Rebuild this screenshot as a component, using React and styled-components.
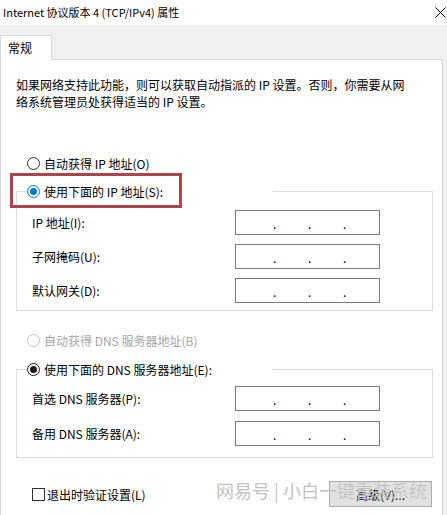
import React from 'react';
import styled, { createGlobalStyle, css } from 'styled-components';

const Global = createGlobalStyle`
  html, body { margin: 0; padding: 0; background: #f0f0f0; }
  body {
    font-family: "Noto Sans CJK SC", "Noto Sans", sans-serif;
    font-size: 12px;
    color: #000;
  }
  * { box-sizing: border-box; }
`;

const Window = styled.div`
  position: relative;
  width: 447px;
  height: 515px;
  overflow: hidden;
  background: #f0f0f0;
`;

const TitleBar = styled.div`
  height: 25px;
  background: #fff;
  display: flex;
  align-items: center;
  justify-content: space-between;
  padding: 0 1px 1px 3px;
  font-size: 11px;
  line-height: 17px;
  color: #000;
`;

const TabStrip = styled.div`
  height: 34px;
  display: flex;
  align-items: flex-end;
`;

const Tab = styled.div`
  position: relative;
  z-index: 1;
  width: 52px;
  height: 25px;
  margin-bottom: -1px;
  padding: 3px 0 0 7px;
  background: #fff;
  border: 1px solid #d9d9d9;
  border-bottom: none;
  line-height: 17px;
`;

const Panel = styled.div`
  width: 443px;
  min-height: 480px;
  background: #fff;
  border: 1px solid #d9d9d9;
  padding: 16px 9px 0 15px;
`;

const Description = styled.p`
  margin: 0;
  line-height: 17px;
  color: #000;
`;

const RadioRow = styled.label`
  display: flex;
  align-items: center;
  gap: 4px;
  height: 17px;
  margin: ${p => p.$top || 0}px 0 0 11px;
  line-height: 17px;
  color: ${p => (p.$disabled ? '#a6a6a6' : '#000')};
`;

const RadioDot = styled.span`
  position: relative;
  flex: none;
  width: 13px;
  height: 13px;
  border-radius: 50%;
  background: #fff;
  border: 1px solid ${p => p.$color};
  ${p =>
    p.$checked &&
    css`
      &::after {
        content: '';
        position: absolute;
        left: 2px;
        top: 2px;
        width: 7px;
        height: 7px;
        border-radius: 50%;
        background: ${p.$color};
      }
    `}
`;

const Group = styled.fieldset`
  margin: ${p => p.$top}px 0 0 0;
  padding: 0;
  min-inline-size: 0;
  border: 1px solid #dcdcdc;
`;

const Legend = styled.legend`
  position: relative;
  margin-left: 10px;
  padding: 0;
  width: 246px;
  height: 17px;
  ${p =>
    p.$highlight &&
    css`
      &::before {
        content: '';
        position: absolute;
        left: -17px;
        top: -10px;
        width: 166px;
        height: 29px;
        border: 3px solid #b0444a;
        pointer-events: none;
      }
    `}
`;

const LegendRow = styled(RadioRow)`
  margin: 0;
`;

const Rows = styled.div`
  display: grid;
  grid-template-columns: 203px 145px;
  grid-auto-rows: 25px;
  row-gap: ${p => p.$gap}px;
  padding: ${p => p.$pt}px 0 ${p => p.$pb}px 15px;
  align-items: center;
`;

const FieldLabel = styled.span`
  line-height: 17px;
`;

const IpBox = styled.div`
  height: 25px;
  border: 1px solid #7a7a7a;
  background: #fff;
  display: flex;
  align-items: center;
  gap: 33px;
  padding: 2px 0 0 37px;
  line-height: 17px;
`;

const Dot = styled.span`
  display: inline-block;
  width: 2px;
  text-align: center;
  color: #000;
`;

const Footer = styled.div`
  display: flex;
  align-items: center;
  justify-content: space-between;
  height: 26px;
  margin-top: 23px;
  padding: 0 1px 0 16px;
`;

const CheckLabel = styled.label`
  display: flex;
  align-items: center;
  gap: 2px;
  line-height: 17px;
`;

const CheckBox = styled.span`
  width: 13px;
  height: 13px;
  border: 1px solid #333;
  background: #fff;
`;

const Button = styled.button`
  width: 103px;
  height: 26px;
  background: #e1e1e1;
  border: 1px solid #adadad;
  font-family: inherit;
  font-size: 12px;
  color: #000;
  padding: 0;
`;

const Watermark = styled.div`
  position: absolute;
  left: 216px;
  top: 477px;
  font-size: 18px;
  line-height: 26px;
  white-space: nowrap;
  color: rgba(165, 165, 165, 0.7);
  text-shadow: 0 0 1px #fff;
  pointer-events: none;
`;

const Close = () => (
  <svg width="11" height="11" viewBox="0 0 11 11">
    <path d="M0.5 0.5 L10.5 10.5 M10.5 0.5 L0.5 10.5" stroke="#000" strokeWidth="1" fill="none" />
  </svg>
);

const Radio = ({ children, checked, color = '#333', disabled, top }) => (
  <RadioRow $top={top} $disabled={disabled}>
    <RadioDot $checked={checked} $color={disabled ? '#c4c4c4' : color} />
    {children}
  </RadioRow>
);

const IpField = () => (
  <IpBox>
    <Dot>.</Dot>
    <Dot>.</Dot>
    <Dot>.</Dot>
  </IpBox>
);

export default function App() {
  return (
    <Window>
      <Global />
      <TitleBar>
        <span>Internet 协议版本 4 (TCP/IPv4) 属性</span>
        <Close />
      </TitleBar>
      <TabStrip>
        <Tab>常规</Tab>
      </TabStrip>
      <Panel>
        <Description>
          如果网络支持此功能，则可以获取自动指派的 IP 设置。否则，你需要从网
          <br />
          络系统管理员处获得适当的 IP 设置。
        </Description>

        <Radio top={45}>自动获得 IP 地址(O)</Radio>

        <Group $top={11}>
          <Legend $highlight>
            <LegendRow>
              <RadioDot $checked $color="#0078d7" />
              使用下面的 IP 地址(S):
            </LegendRow>
          </Legend>
          <Rows $pt={10} $pb={7} $gap={9}>
            <FieldLabel>IP 地址(I):</FieldLabel>
            <IpField />
            <FieldLabel>子网掩码(U):</FieldLabel>
            <IpField />
            <FieldLabel>默认网关(D):</FieldLabel>
            <IpField />
          </Rows>
        </Group>

        <Radio top={21} disabled>自动获得 DNS 服务器地址(B)</Radio>

        <Group $top={12}>
          <Legend>
            <LegendRow>
              <RadioDot $checked $color="#1a1a1a" />
              使用下面的 DNS 服务器地址(E):
            </LegendRow>
          </Legend>
          <Rows $pt={8} $pb={11} $gap={10}>
            <FieldLabel>首选 DNS 服务器(P):</FieldLabel>
            <IpField />
            <FieldLabel>备用 DNS 服务器(A):</FieldLabel>
            <IpField />
          </Rows>
        </Group>

        <Footer>
          <CheckLabel>
            <CheckBox />
            退出时验证设置(L)
          </CheckLabel>
          <Button>高级(V)...</Button>
        </Footer>
      </Panel>
      <Watermark>网易号 | 小白一键重装系统</Watermark>
    </Window>
  );
}
